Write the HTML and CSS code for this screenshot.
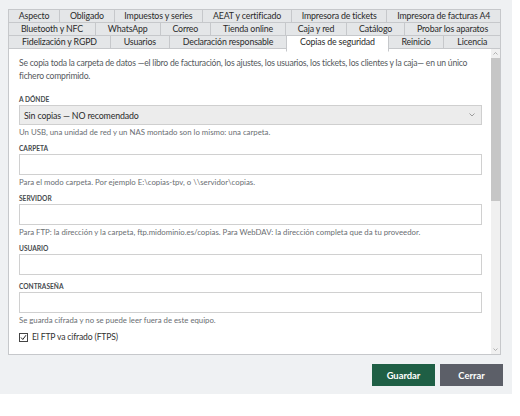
FILE: index.html
```html
<!doctype html>
<html lang="es">
  <head>
    <meta charset="UTF-8" />
    <meta name="viewport" content="width=device-width, initial-scale=1.0" />
    <title>Configuración</title>
    <link rel="stylesheet" href="styles.css">
  </head>
  <body>
    <div class="window">
      <div class="tabs">
        <div class="tab-row">
          <div class="tab">Aspecto</div>
          <div class="tab">Obligado</div>
          <div class="tab">Impuestos y series</div>
          <div class="tab">AEAT y certificado</div>
          <div class="tab">Impresora de tickets</div>
          <div class="tab">Impresora de facturas A4</div>
        </div>
        <div class="tab-row">
          <div class="tab">Bluetooth y NFC</div>
          <div class="tab">WhatsApp</div>
          <div class="tab">Correo</div>
          <div class="tab">Tienda online</div>
          <div class="tab">Caja y red</div>
          <div class="tab">Catálogo</div>
          <div class="tab">Probar los aparatos</div>
        </div>
        <div class="tab-row">
          <div class="tab">Fidelización y RGPD</div>
          <div class="tab">Usuarios</div>
          <div class="tab">Declaración responsable</div>
          <div class="tab active">Copias de seguridad</div>
          <div class="tab">Reinicio</div>
          <div class="tab">Licencia</div>
        </div>
      </div>

      <div class="panel">
        <div class="panel-body">
          <p class="intro">Se copia toda la carpeta de datos —el libro de facturación, los ajustes, los usuarios, los tickets, los clientes y la caja— en un único fichero comprimido.</p>

          <div class="field">
            <label>A dónde</label>
            <div class="select">
              <span>Sin copias — NO recomendado</span>
              <svg width="6" height="4" viewBox="0 0 6 4"><path d="M0.5 0.5 L3 3 L5.5 0.5" fill="none" stroke="#888" stroke-width="0.8"/></svg>
            </div>
            <div class="hint">Un USB, una unidad de red y un NAS montado son lo mismo: una carpeta.</div>
          </div>

          <div class="field">
            <label>Carpeta</label>
            <input type="text" />
            <div class="hint">Para el modo carpeta. Por ejemplo E:\copias-tpv, o \\servidor\copias.</div>
          </div>

          <div class="field">
            <label>Servidor</label>
            <input type="text" />
            <div class="hint">Para FTP: la dirección y la carpeta, ftp.midominio.es/copias. Para WebDAV: la dirección completa que da tu proveedor.</div>
          </div>

          <div class="field">
            <label>Usuario</label>
            <input type="text" />
          </div>

          <div class="field">
            <label>Contraseña</label>
            <input type="password" />
            <div class="hint">Se guarda cifrada y no se puede leer fuera de este equipo.</div>
          </div>

          <label class="check">
            <input type="checkbox" checked />
            <span>El FTP va cifrado (FTPS)</span>
          </label>
        </div>

        <!-- vertical scrollbar of the page body -->
        <div class="scrollbar">
          <div class="scroll-arrow">
            <svg width="5" height="3" viewBox="0 0 5 3"><path d="M0.5 2.5 L2.5 0.5 L4.5 2.5" fill="none" stroke="#a0a0a0" stroke-width="0.8"/></svg>
          </div>
          <div class="scroll-track">
            <div class="scroll-thumb"></div>
          </div>
          <div class="scroll-arrow">
            <svg width="5" height="3" viewBox="0 0 5 3"><path d="M0.5 0.5 L2.5 2.5 L4.5 0.5" fill="none" stroke="#a0a0a0" stroke-width="0.8"/></svg>
          </div>
        </div>
      </div>

      <div class="actions">
        <button class="btn btn-save">Guardar</button>
        <button class="btn btn-close">Cerrar</button>
      </div>
    </div>
  </body>
</html>
```

FILE: styles.css
```css
:root {
  --bg: #eff1f3;
  --border: #c6c8cb;
  --tab-bg: #e4e6e8;
  --text: #2a2a2a;
  --muted: #6a6e72;
  --green: #1f5f45;
  --slate: #5c5f68;
}

body {
  margin: 0;
  background: #ffffff;
  font-family: Lato, "Open Sans", sans-serif;
  color: var(--text);
}

.window {
  width: 512px;
  height: 394px;
  box-sizing: border-box;
  padding: 9px 11px 0 8px;
  background: var(--bg);
}

/* Tab strip: three justified rows */
.tabs {
  display: flex;
  flex-direction: column;
}

.tab-row {
  display: flex;
  height: 14px;
  margin-bottom: -1px;
}

.tab {
  flex: 1 1 auto;
  min-width: 0;
  padding: 0 4px;
  border: 1px solid var(--border);
  margin-left: -1px;
  background: var(--tab-bg);
  font-size: 8.8px;
  letter-spacing: -0.15px;
  line-height: 12px;
  text-align: center;
  white-space: nowrap;
  overflow: hidden;
}

.tab:first-child {
  margin-left: 0;
}

.tab.active {
  background: #ffffff;
  border-bottom-color: #ffffff;
  position: relative;
  z-index: 1;
  height: 15px;
}

/* Page body */
.panel {
  display: flex;
  height: 307px;
  box-sizing: border-box;
  border: 1px solid var(--border);
  background: #ffffff;
}

.panel-body {
  flex: 1;
  overflow: hidden;
  padding: 8px 9px 0 10px;
}

.scrollbar {
  display: flex;
  flex-direction: column;
  width: 9px;
  background: #f0f0f0;
}

.scroll-arrow {
  display: flex;
  align-items: center;
  justify-content: center;
  height: 9px;
}

.scroll-track {
  flex: 1;
}

.scroll-thumb {
  height: 143px;
  background: #c6c6c6;
}

.intro {
  margin: 0 0 12px;
  font-size: 8.6px;
  letter-spacing: -0.22px;
  line-height: 13px;
  color: #55595d;
}

.field {
  margin-bottom: 7px;
}

.field label {
  display: block;
  font-size: 6.6px;
  line-height: 8px;
  font-weight: 700;
  text-transform: uppercase;
  color: #464a4e;
  margin-bottom: 2px;
}

.select {
  display: flex;
  align-items: center;
  justify-content: space-between;
  height: 20px;
  box-sizing: border-box;
  padding: 0 6px 0 4px;
  border: 1px solid #cfcfcf;
  background: #ececec;
  font-size: 8.8px;
  letter-spacing: -0.15px;
}

input[type='text'],
input[type='password'] {
  display: block;
  width: 100%;
  height: 21px;
  box-sizing: border-box;
  margin: 0;
  border: 1px solid #d0d0d0;
  background: #ffffff;
}

.hint {
  margin-top: 3px;
  font-size: 7.8px;
  line-height: 9px;
  color: var(--muted);
}

.check {
  display: flex;
  align-items: center;
  gap: 4px;
  margin-top: 7px;
  font-size: 8.6px;
  letter-spacing: -0.15px;
  color: #333333;
}

/* plain boxed tick, no accent fill */
.check input {
  appearance: none;
  margin: 0;
  width: 9px;
  height: 9px;
  border: 1px solid #444444;
  background: #ffffff url("data:image/svg+xml;utf8,<svg xmlns='http://www.w3.org/2000/svg' width='7' height='7'><path d='M1 3.5 L2.8 5.5 L6 1.2' fill='none' stroke='%23222' stroke-width='1'/></svg>") no-repeat center;
}

/* Bottom buttons */
.actions {
  display: flex;
  justify-content: flex-end;
  gap: 5px;
  margin: 9px -2px 0 0;
}

.btn {
  width: 63px;
  height: 22px;
  border: none;
  color: #ffffff;
  font-family: inherit;
  font-size: 9.4px;
  font-weight: 700;
}

.btn-save {
  background: var(--green);
}

.btn-close {
  background: var(--slate);
}
```
